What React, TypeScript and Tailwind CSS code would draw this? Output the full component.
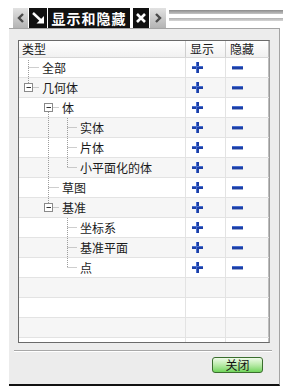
import React from "react";

type Row = {
  label: string;
  level: number;
  box?: boolean;
  v: [number, number, number][];
};

const CX = [9.5, 29.5, 48.5];
const TEXT_X = [23, 43, 61];

const rows: Row[] = [
  { label: "全部", level: 0, v: [[0, 2, 20]] },
  { label: "几何体", level: 0, box: true, v: [[0, 0, 5]] },
  { label: "体", level: 1, box: true, v: [[1, 14, 20]] },
  { label: "实体", level: 2, v: [[1, 0, 20], [2, 0, 20]] },
  { label: "片体", level: 2, v: [[1, 0, 20], [2, 0, 20]] },
  { label: "小平面化的体", level: 2, v: [[1, 0, 20], [2, 0, 10]] },
  { label: "草图", level: 1, v: [[1, 0, 20]] },
  { label: "基准", level: 1, box: true, v: [[1, 0, 5]] },
  { label: "坐标系", level: 2, v: [[2, 0, 20]] },
  { label: "基准平面", level: 2, v: [[2, 0, 20]] },
  { label: "点", level: 2, v: [[2, 0, 10]] },
];

const font = { fontFamily: '"Noto Sans CJK SC", "Noto Sans", sans-serif' };

function TreeLines({ row }: { row: Row }) {
  const w = TEXT_X[row.level];
  const cx = CX[row.level];
  const hx1 = row.box ? cx + 4 : cx;
  return (
    <svg width={w} height={19} className="shrink-0">
      {row.v.map(([lvl, y1, y2], i) => (
        <line
          key={i}
          x1={CX[lvl]}
          x2={CX[lvl]}
          y1={y1}
          y2={y2}
          stroke="#9c9c9c"
          strokeDasharray="1 1"
        />
      ))}
      <line x1={hx1} x2={w - 3} y1={9.5} y2={9.5} stroke="#9c9c9c" strokeDasharray="1 1" />
      {row.box && (
        <g>
          <rect x={cx - 4} y={5.5} width={8} height={8} fill="#fff" stroke="#8a8a8a" />
          <line x1={cx - 2} x2={cx + 2.5} y1={9.5} y2={9.5} stroke="#333" />
        </g>
      )}
    </svg>
  );
}

function PlusIcon() {
  return (
    <svg width="11" height="11" viewBox="0 0 11 11">
      <rect x="4" y="0" width="3" height="11" fill="#1c3fa6" />
      <rect x="0" y="4" width="11" height="3" fill="#1c3fa6" />
      <rect x="4" y="0" width="1" height="11" fill="#4a6fd0" />
      <rect x="0" y="4" width="11" height="1" fill="#4a6fd0" />
    </svg>
  );
}

function MinusIcon() {
  return (
    <svg width="11" height="4" viewBox="0 0 11 4">
      <rect x="0" y="0" width="11" height="3" fill="#1c3fa6" />
      <rect x="0" y="0" width="11" height="1" fill="#4a6fd0" />
      <rect x="0" y="3" width="11" height="1" fill="#9aa8d0" />
    </svg>
  );
}

export default function App() {
  const empty = [0, 1, 2];
  return (
    <div className="w-[291px] h-[389px] bg-white pt-[8px] text-[12px] text-[#1a1a1a]" style={font}>
      {/* tab strip */}
      <div className="flex h-[20px] ml-[13px] w-[270px] gap-px">
        <div className="w-[15px] bg-gradient-to-b from-[#e2e2e2] to-[#b4b4b4] flex items-center justify-center">
          <svg width="8" height="10" viewBox="0 0 8 10">
            <polyline points="6,1 2,5 6,9" fill="none" stroke="#4a4a4a" strokeWidth="2.4" />
          </svg>
        </div>
        <div className="w-[18px] bg-[#111] flex items-center justify-center">
          <svg width="13" height="12" viewBox="0 0 13 12">
            <line x1="1" y1="1" x2="9" y2="8.5" stroke="#fff" strokeWidth="2.4" />
            <polygon points="12,11.5 4.5,11.5 12,4" fill="#fff" />
          </svg>
        </div>
        <div className="w-[82px] bg-[#111] text-white font-bold text-[14px] tracking-[1px] flex items-center justify-center leading-none">
          显示和隐藏
        </div>
        <div className="w-[1px] bg-white" />
        <div className="w-[16px] bg-[#111] flex items-center justify-center">
          <svg width="10" height="10" viewBox="0 0 10 10">
            <path d="M1 1 L9 9 M9 1 L1 9" stroke="#fff" strokeWidth="2.6" />
          </svg>
        </div>
        <div className="w-[16px] bg-gradient-to-b from-[#e2e2e2] to-[#b4b4b4] flex items-center justify-center">
          <svg width="8" height="10" viewBox="0 0 8 10">
            <polyline points="2,1 6,5 2,9" fill="none" stroke="#4a4a4a" strokeWidth="2.4" />
          </svg>
        </div>
        <div className="flex-1 ml-[2px] flex flex-col pt-[2px]">
          <div className="h-[4px] bg-gradient-to-b from-[#8c8c8c] to-[#c4c4c4]" />
          <div className="h-[4px]" />
          <div className="h-[3px] bg-gradient-to-b from-[#b0b0b0] to-[#d6d6d6]" />
        </div>
      </div>

      {/* dialog panel */}
      <div className="ml-[9px] w-[271px] h-[358px] bg-[#ececec] border-t border-r border-[#a4a4a4] border-b-2 border-b-[#111] flex flex-col">
        <div className="pl-[9px] pt-[11px]">
          <div className="w-[252px] h-[303px] border border-[#6a6a6a] border-r-[#9a9a9a] bg-white overflow-hidden">
            {/* header */}
            <div className="grid grid-cols-[167px_40px_43px] h-[17px] border-b border-[#d8d8d8] bg-gradient-to-b from-white to-[#f1f1f1] leading-[16px] text-[12px]">
              <div className="pl-[3px] border-r border-[#cfcfcf]">类型</div>
              <div className="pl-[4px] border-r border-[#cfcfcf]">显示</div>
              <div className="pl-[4px] border-r border-[#bdbdbd]">隐藏</div>
            </div>
            {rows.map((row, i) => (
              <div
                key={row.label}
                className={`grid grid-cols-[167px_40px_43px] h-[20px] border-b border-[#e3e3e3] ${
                  i % 2 === 1 ? "bg-[#f6f6f6]" : "bg-white"
                }`}
              >
                <div className="flex items-center border-r border-[#e3e3e3] leading-[19px]">
                  <TreeLines row={row} />
                  <span>{row.label}</span>
                </div>
                <div className="flex items-center pl-[6px] border-r border-[#e3e3e3]">
                  <PlusIcon />
                </div>
                <div className="flex items-center pl-[6px] border-r border-[#bdbdbd]">
                  <MinusIcon />
                </div>
              </div>
            ))}
            {empty.map((k) => (
              <div
                key={k}
                className={`grid grid-cols-[167px_40px_43px] h-[20px] border-b border-[#e3e3e3] ${
                  (k + rows.length) % 2 === 1 ? "bg-[#f6f6f6]" : "bg-white"
                }`}
              >
                <div className="border-r border-[#e3e3e3]" />
                <div className="border-r border-[#e3e3e3]" />
                <div className="border-r border-[#bdbdbd]" />
              </div>
            ))}
            <div className="grid grid-cols-[167px_40px_43px] h-[4px] bg-white">
              <div className="border-r border-[#e3e3e3]" />
              <div className="border-r border-[#e3e3e3]" />
              <div className="border-r border-[#bdbdbd]" />
            </div>
          </div>
        </div>

        {/* separator */}
        <div className="ml-[5px] mt-[7px] w-[258px] border-t border-[#a8a8a8] border-b border-b-white" />

        {/* footer */}
        <div className="flex justify-end pr-[16px] pt-[5px]">
          <button className="w-[51px] h-[16px] rounded-[3px] border border-[#3a6e2e] bg-gradient-to-b from-[#eefbe8] via-[#b8eaa8] to-[#6fd45a] text-[12px] leading-[14px] text-[#111] flex items-center justify-center">
            关闭
          </button>
        </div>
      </div>
    </div>
  );
}
